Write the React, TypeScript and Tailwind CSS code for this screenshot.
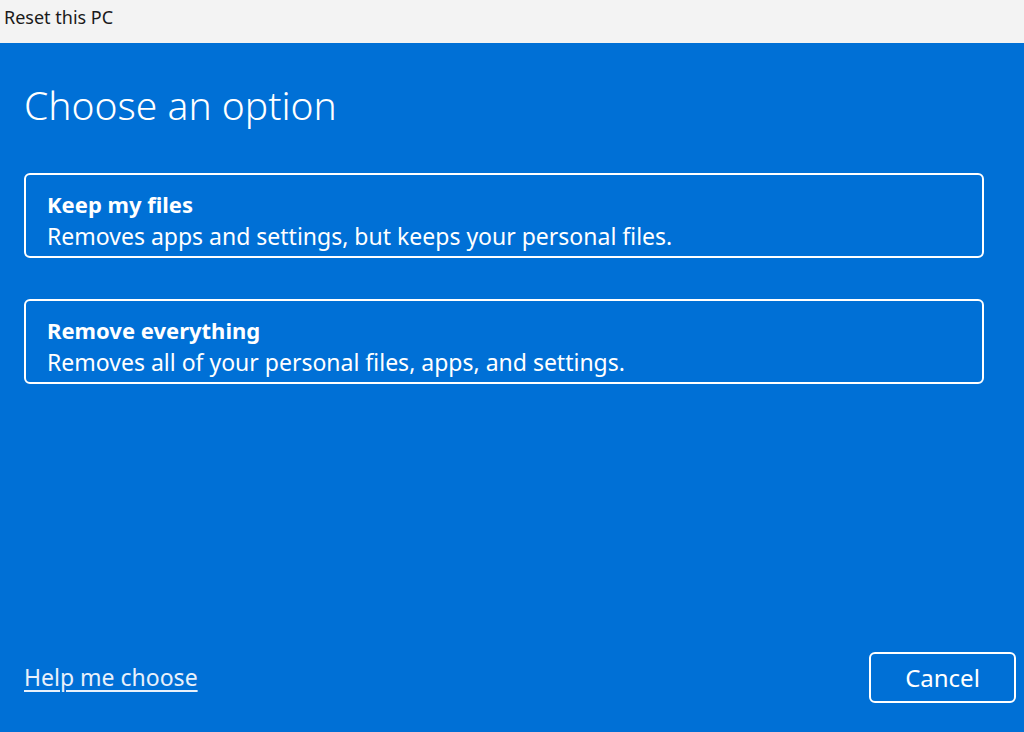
export default function App() {
  const options = [
    { title: "Keep my files", desc: "Removes apps and settings, but keeps your personal files." },
    { title: "Remove everything", desc: "Removes all of your personal files, apps, and settings." },
  ];

  return (
    <div className="h-[732px] w-[1024px] flex flex-col overflow-hidden" style={{ fontFamily: '"Noto Sans", "Open Sans", sans-serif' }}>
      <div className="h-[43px] bg-[#f3f3f3] pl-[4px] pt-[4px] text-[18px] text-[#1a1a1a] leading-[26px]">
        Reset this PC
      </div>

      <div className="flex-1 bg-[#0070d6] text-white flex flex-col px-[24px]">
        <h1 className="mt-[37px] text-[39px] font-light leading-[50px]">Choose an option</h1>

        <div className="mt-[43px] flex flex-col gap-[41px] w-[960px]">
          {options.map((o) => (
            <button
              key={o.title}
              className="h-[85px] border-2 border-white rounded-[6px] text-left px-[21px] pt-[9px]"
            >
              <div className="text-[22px] font-bold leading-[32px]">{o.title}</div>
              <div className="text-[23px] leading-[32px]">{o.desc}</div>
            </button>
          ))}
        </div>

        <div className="mt-auto mb-[29px] flex items-center justify-between">
          <a className="text-[23px] underline underline-offset-[4px] text-[#e8f1fb]">Help me choose</a>
          <button className="w-[147px] h-[51px] mr-[-16px] border-2 border-white rounded-[6px] text-[24px]">
            Cancel
          </button>
        </div>
      </div>
    </div>
  );
}
